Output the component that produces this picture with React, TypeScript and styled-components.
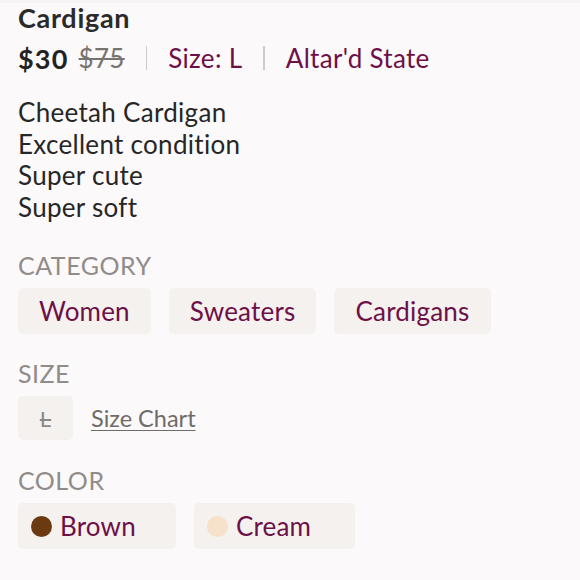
import React from "react";
import styled, { createGlobalStyle } from "styled-components";

const GlobalStyle = createGlobalStyle`
  html, body {
    margin: 0;
    padding: 0;
    background: #fcf9fa;
  }
  body {
    font-family: Lato, "Noto Sans", sans-serif;
    color: #222;
  }
`;

const Page = styled.div`
  width: 580px;
  height: 580px;
  box-sizing: border-box;
  padding: 0 18px;
  overflow: hidden;
  border-top: 3px solid #f7f4f5;
`;

const Title = styled.h1`
  margin: 0;
  font-size: 27px;
  font-weight: 700;
  line-height: 30px;
  letter-spacing: 0.7px;
  color: #2a2a2a;
`;

const PriceRow = styled.div`
  display: flex;
  align-items: center;
  height: 40px;
  margin-top: 5px;
  font-size: 26px;
  letter-spacing: 0.3px;
`;

const Price = styled.span`
  font-weight: 700;
  font-size: 27px;
  letter-spacing: 1.2px;
  color: #222;
`;

const OldPrice = styled.span`
  margin-left: 10px;
  color: #77736f;
  text-decoration: line-through;
  text-decoration-thickness: 1.5px;
`;

const Divider = styled.span`
  width: 1.5px;
  height: 24px;
  background: #cfcbc8;
  margin: 0 21px;
`;

const Meta = styled.span`
  color: #6e1048;
`;

const Description = styled.div`
  margin-top: 19px;
  font-size: 26px;
  line-height: 31.5px;
  letter-spacing: 0.3px;
  color: #262626;
`;

const Label = styled.div`
  margin-top: ${({ $top }: { $top: number }) => $top}px;
  font-size: 25px;
  line-height: 28px;
  letter-spacing: 0.5px;
  color: #908c89;
  text-transform: uppercase;
`;

const ChipRow = styled.div`
  display: flex;
  align-items: center;
  gap: 18px;
  margin-top: 9px;
`;

const Chip = styled.div<{ $left?: number; $right?: number }>`
  height: 46px;
  box-sizing: border-box;
  padding: 0 ${({ $right }) => $right ?? 21}px 0 ${({ $left }) => $left ?? 21}px;
  display: flex;
  align-items: center;
  gap: 8px;
  background: #f4f1ef;
  border-radius: 5px;
  color: #6e1048;
  font-size: 26px;
  letter-spacing: 0.2px;
`;

const SizeBox = styled.div`
  width: 55px;
  height: 44px;
  display: flex;
  align-items: center;
  justify-content: center;
  background: #f4f1ef;
  border-radius: 5px;
  color: #8c8884;
  font-size: 22px;
  text-decoration: line-through;
`;

const SizeChart = styled.a`
  color: #6f6b68;
  font-size: 23.5px;
  text-decoration: underline;
  text-underline-offset: 3px;
  text-decoration-thickness: 1px;
  cursor: pointer;
`;

const Dot = styled.span<{ $color: string }>`
  width: 21px;
  height: 21px;
  border-radius: 50%;
  background: ${({ $color }) => $color};
  flex-shrink: 0;
`;

const categories = ["Women", "Sweaters", "Cardigans"];
const colors = [
  { name: "Brown", hex: "#6b3a10" },
  { name: "Cream", hex: "#f6e1cb" },
];

export default function App() {
  return (
    <>
      <GlobalStyle />
      <Page>
        <Title>Cardigan</Title>
        <PriceRow>
          <Price>$30</Price>
          <OldPrice>$75</OldPrice>
          <Divider />
          <Meta>Size: L</Meta>
          <Divider />
          <Meta>Altar'd State</Meta>
        </PriceRow>
        <Description>
          Cheetah Cardigan
          <br />
          Excellent condition
          <br />
          Super cute
          <br />
          Super soft
        </Description>

        <Label $top={28}>Category</Label>
        <ChipRow>
          {categories.map((c) => (
            <Chip key={c}>{c}</Chip>
          ))}
        </ChipRow>

        <Label $top={25}>Size</Label>
        <ChipRow>
          <SizeBox>L</SizeBox>
          <SizeChart>Size Chart</SizeChart>
        </ChipRow>

        <Label $top={26}>Color</Label>
        <ChipRow>
          {colors.map((c) => (
            <Chip key={c.name} $left={13} $right={c.name === "Cream" ? 44 : 40}>
              <Dot $color={c.hex} />
              {c.name}
            </Chip>
          ))}
        </ChipRow>
      </Page>
    </>
  );
}
